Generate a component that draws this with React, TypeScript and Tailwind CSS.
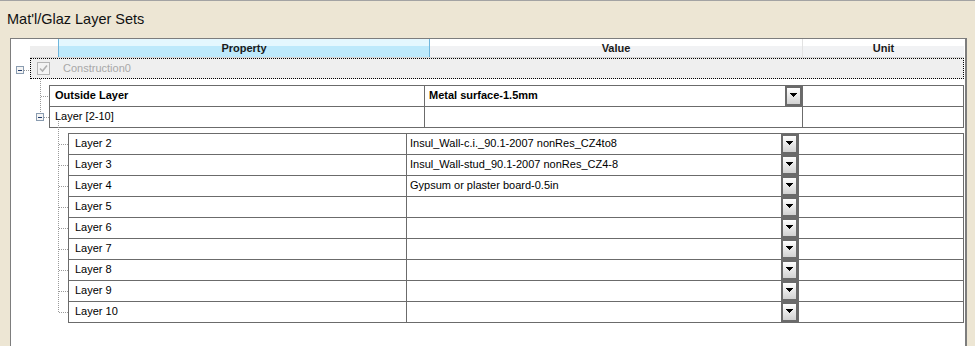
import React from "react";

const layers: [string, string][] = [
  ["Layer 2", "Insul_Wall-c.i._90.1-2007 nonRes_CZ4to8"],
  ["Layer 3", "Insul_Wall-stud_90.1-2007 nonRes_CZ4-8"],
  ["Layer 4", "Gypsum or plaster board-0.5in"],
  ["Layer 5", ""],
  ["Layer 6", ""],
  ["Layer 7", ""],
  ["Layer 8", ""],
  ["Layer 9", ""],
  ["Layer 10", ""],
];

// little grey minus box used by the tree
function Expander({ x, y }: { x: number; y: number }) {
  return (
    <g>
      <rect x={x + 0.5} y={y + 0.5} width={7} height={7} fill="#f4f4f4" stroke="#8a9cb0" />
      <line x1={x + 2} y1={y + 4.5} x2={x + 6} y2={y + 4.5} stroke="#1f3b6c" />
    </g>
  );
}

function DropButton() {
  return (
    <div className="w-[17px] h-full border-2 border-[#6a6a6a] bg-linear-to-b from-white to-[#d2d2d2] flex justify-center items-center pb-[2px]">
      <svg width="7" height="4" viewBox="0 0 7 4" shapeRendering="crispEdges">
        <path d="M0 0h7v1H0zM1 1h5v1H1zM2 2h3v1H2zM3 3h1v1H3z" fill="#000" />
      </svg>
    </div>
  );
}

export default function App() {
  const dots = { stroke: "#9a9a9a", strokeDasharray: "1 1", shapeRendering: "crispEdges" as const };

  return (
    <div className="w-[975px] h-[346px] bg-[#ede6d4] border-t border-[#a3a3a3] flex flex-col overflow-hidden font-['Liberation_Sans',Arial,sans-serif] text-[11px] text-black">
      <div className="h-[37px] pl-[7px] pt-[10px] text-[14.5px] leading-[16px] text-[#111]">Mat'l/Glaz Layer Sets</div>

      <div className="flex-1 ml-[10px] w-[957px] bg-white border-l border-t border-r-2 border-[#7d7d7d] flex flex-col">
        {/* column headers */}
        <div className="flex h-[19px]">
          <div className="w-[19px] bg-white" />
          <div className="flex-1 flex mr-[1px] border-b border-[#d5d5d5] font-bold text-[#1a1a1a]">
            <div className="w-[28px] bg-[linear-gradient(to_bottom,#ffffff_0,#ffffff_7px,#eeeeee_7px,#eeeeee_100%)]" />
            <div className="w-[372px] border-x border-[#6fb6dc] bg-[linear-gradient(to_bottom,#e4f7fe_0,#e4f7fe_7px,#bde9fb_7px,#bde9fb_100%)] flex items-center justify-center">
              Property
            </div>
            <div className="w-[373px] border-r border-[#e2e2e2] bg-[linear-gradient(to_bottom,#ffffff_0,#ffffff_7px,#f1f2f4_7px,#f1f2f4_100%)] flex items-center justify-center">
              Value
            </div>
            <div className="flex-1 bg-[linear-gradient(to_bottom,#ffffff_0,#ffffff_7px,#f1f2f4_7px,#f1f2f4_100%)] flex items-center justify-center">
              Unit
            </div>
          </div>
        </div>

        {/* Construction0 */}
        <div className="flex h-[21px]">
          <svg width="19" height="21">
            <Expander x={5} y={8} />
            <line x1={13} y1={12.5} x2={19} y2={12.5} {...dots} />
          </svg>
          <div className="flex-1 mr-[1px] border border-dotted border-black bg-[#efefef] flex items-center pl-[6px]">
            <svg width="13" height="13" viewBox="0 0 13 13">
              <rect x="0.5" y="0.5" width="12" height="12" fill="#f3f3f3" stroke="#b5b5b5" />
              <path d="M3 6.5l2.5 2.5L10 3.5" fill="none" stroke="#b0b0b0" strokeWidth="1.6" />
            </svg>
            <span className="ml-[13px] pb-[1px] text-[#a8a8a8]">Construction0</span>
          </div>
        </div>

        {/* Outside layer / Layer [2-10] */}
        <div className="flex">
          <svg width="38" height="49" className="shrink-0">
            <line x1={29.5} y1={0} x2={29.5} y2={34} {...dots} />
            <line x1={29.5} y1={17.5} x2={38} y2={17.5} {...dots} />
            <line x1={33} y1={38.5} x2={38} y2={38.5} {...dots} />
            <Expander x={25} y={34} />
          </svg>
          <div className="flex-1 mr-[1px] pt-[6px]">
            <div className="border-x border-t border-[#6b6b6b]">
              <div className="flex h-[21px] border-b border-[#6b6b6b] font-bold">
                <div className="w-[375px] border-r border-[#6b6b6b] pl-[5px] pb-[2px] flex items-center">Outside Layer</div>
                <div className="w-[378px] border-r border-[#6b6b6b] flex">
                  <div className="flex-1 pl-[4px] pb-[2px] flex items-center">Metal surface-1.5mm</div>
                  <DropButton />
                </div>
                <div className="flex-1" />
              </div>
              <div className="flex h-[21px] border-b border-[#6b6b6b]">
                <div className="w-[375px] border-r border-[#6b6b6b] pl-[5px] pb-[2px] flex items-center">Layer [2-10]</div>
                <div className="w-[378px] border-r border-[#6b6b6b]" />
                <div className="flex-1" />
              </div>
            </div>
          </div>
        </div>

        {/* Layer 2..10 */}
        <div className="flex">
          <svg width="57" height="195" overflow="visible" className="shrink-0">
            <line x1={47.5} y1={-7} x2={47.5} y2={184} {...dots} />
            {layers.map((_, i) => (
              <line key={i} x1={47.5} y1={16.5 + 21 * i} x2={57} y2={16.5 + 21 * i} {...dots} />
            ))}
          </svg>
          <div className="flex-1 mr-[1px] pt-[5px]">
            <div className="border-x border-t border-[#6b6b6b]">
              {layers.map(([name, value]) => (
                <div key={name} className="flex h-[21px] border-b border-[#6b6b6b]">
                  <div className="w-[338px] border-r border-[#6b6b6b] pl-[6px] pb-[2px] flex items-center">{name}</div>
                  <div className="w-[392px] border-r border-[#6b6b6b] flex">
                    <div className="flex-1 pl-[3px] pb-[2px] flex items-center">{value}</div>
                    <DropButton />
                  </div>
                  <div className="flex-1" />
                </div>
              ))}
            </div>
          </div>
        </div>
      </div>
    </div>
  );
}
